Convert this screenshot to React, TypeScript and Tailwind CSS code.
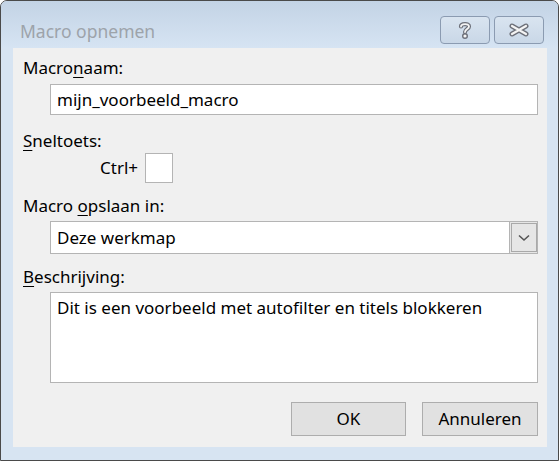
import React from "react";

const font = { fontFamily: '"Noto Sans", "Open Sans", sans-serif' };

function U({ children }: { children: React.ReactNode }) {
  return <span className="underline underline-offset-[3px]">{children}</span>;
}

export default function App() {
  return (
    <div className="w-[559px] h-[461px] bg-white" style={font}>
      <div className="w-[559px] h-[461px] border border-[#4a4a4a] rounded-t-[7px] bg-[#d7e4f2] flex flex-col overflow-hidden">
        {/* title bar */}
        <div className="h-[47px] flex items-start bg-gradient-to-b from-[#c3d3e5] to-[#d6e4f3] shrink-0">
          <div className="pl-[19px] pt-[18px] text-[17.5px] leading-[24px] text-[#9da3aa]">Macro opnemen</div>
          <div className="ml-auto mr-[14px] mt-[15px] flex gap-[4px]">
            <div className="w-[50px] h-[28px] rounded-[4px] border border-[#8b9bb1] bg-gradient-to-b from-[#d9e4f0] to-[#c9d7e7] flex items-center justify-center">
              <svg width="14" height="18" viewBox="0 0 14 18">
                <path d="M3 5.5 C3 2.5 11 2 11 5.5 C11 8 7 8 7 11" fill="none" stroke="#6d7079" strokeWidth="4.2" strokeLinecap="round" />
                <path d="M3 5.5 C3 2.5 11 2 11 5.5 C11 8 7 8 7 11" fill="none" stroke="#f4f4f4" strokeWidth="1.8" strokeLinecap="round" />
                <circle cx="7" cy="15" r="2.3" fill="#f4f4f4" stroke="#6d7079" strokeWidth="1.4" />
              </svg>
            </div>
            <div className="w-[50px] h-[28px] rounded-[4px] border border-[#8b9bb1] bg-gradient-to-b from-[#d9e4f0] to-[#c9d7e7] flex items-center justify-center">
              <svg width="22" height="14" viewBox="0 0 22 14">
                <path d="M4 3 L18 11 M18 3 L4 11" fill="none" stroke="#6d7079" strokeWidth="5" strokeLinecap="round" />
                <path d="M4 3 L18 11 M18 3 L4 11" fill="none" stroke="#f4f4f4" strokeWidth="2.2" strokeLinecap="round" />
              </svg>
            </div>
          </div>
        </div>
        {/* content */}
        <div className="mx-[12px] mr-[11px] h-[399px] bg-[#f0f0f0] flex flex-col pl-[10px] pr-[9px] pt-[10px] text-[17px] leading-[20px] text-black">
          <div className="h-[20px]">Macro<U>n</U>aam:</div>
          <div className="ml-[27px] mt-[6px] h-[31px] border border-[#b4b4b4] bg-white flex items-center px-[6px]">mijn_voorbeeld_macro</div>
          <div className="mt-[16px] h-[20px]"><U>S</U>neltoets:</div>
          <div className="mt-[2px] flex items-center h-[30px]">
            <span className="ml-[77px] w-[45px]">Ctrl+</span>
            <div className="w-[28px] h-[30px] border border-[#b4b4b4] bg-white" />
          </div>
          <div className="mt-[13px] h-[20px]">Macro <U>o</U>pslaan in:</div>
          <div className="ml-[27px] mt-[5px] h-[33px] border border-[#b4b4b4] bg-white flex items-center">
            <span className="pl-[6px] flex-1">Deze werkmap</span>
            <div className="w-[28px] h-[31px] border-l border-[#b4b4b4] bg-[#e6e6e6] flex items-center justify-center">
              <div className="w-[26px] h-[29px] border border-[#a9a9a9] flex items-center justify-center">
                <svg width="12" height="8" viewBox="0 0 12 8">
                  <path d="M1 1.5 L6 6 L11 1.5" fill="none" stroke="#555" strokeWidth="1.6" />
                </svg>
              </div>
            </div>
          </div>
          <div className="mt-[13px] h-[20px]"><U>B</U>eschrijving:</div>
          <div className="ml-[27px] mt-[5px] h-[91px] border border-[#b4b4b4] bg-white px-[6px] pt-[5px]">
            Dit is een voorbeeld met autofilter en titels blokkeren
          </div>
          <div className="mt-[19px] flex justify-end gap-[16px]">
            <div className="w-[115px] h-[34px] border border-[#adadad] bg-[#e1e1e1] flex items-center justify-center">OK</div>
            <div className="w-[116px] h-[34px] border border-[#adadad] bg-[#e1e1e1] flex items-center justify-center">Annuleren</div>
          </div>
        </div>
      </div>
    </div>
  );
}
